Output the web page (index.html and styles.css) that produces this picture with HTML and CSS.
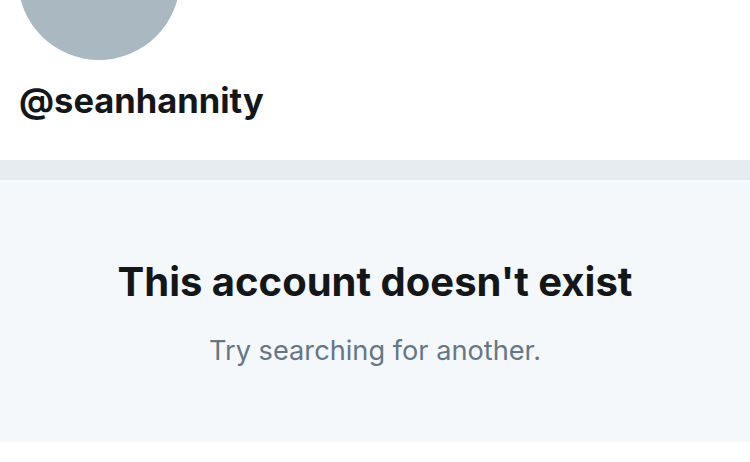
FILE: index.html
```html
<!DOCTYPE html>
<html>
<head>
<meta charset="utf-8">
<link rel="stylesheet" href="styles.css">
</head>
<body>
<header class="profile">
  <div class="avatar"></div>
  <div class="handle">@seanhannity</div>
</header>
<div class="divider"></div>
<main class="empty">
  <h1 class="empty-title">This account doesn't exist</h1>
  <p class="empty-sub">Try searching for another.</p>
</main>
</body>
</html>
```
FILE: styles.css
```css
html, body {
  margin: 0;
  padding: 0;
  background: #ffffff;
  width: 750px;
  height: 462px;
  overflow: hidden;
  font-family: Inter, "Liberation Sans", sans-serif;
}
.profile {
  height: 160px;
  background: #ffffff;
  display: flex;
  flex-direction: column;
  padding-left: 18px;
  box-sizing: border-box;
}
.avatar {
  width: 162px;
  height: 162px;
  border-radius: 50%;
  background: #aab8c2;
  margin-top: -102px;
  flex: none;
}
.handle {
  margin-top: 21px;
  margin-left: 1px;
  font-size: 34.5px;
  font-weight: 700;
  color: #14171a;
  line-height: 40px;
}
.divider {
  height: 20px;
  background: #e6ecf0;
}
.empty {
  height: 262px;
  background: #f5f8fa;
  display: flex;
  flex-direction: column;
  align-items: center;
  box-sizing: border-box;
  padding-top: 78px;
}
.empty-title {
  margin: 0;
  font-size: 40px;
  font-weight: 700;
  color: #14171a;
  line-height: 48px;
}
.empty-sub {
  margin: 29px 0 0;
  font-size: 27.2px;
  font-weight: 400;
  color: #657786;
  line-height: 32px;
}
```
